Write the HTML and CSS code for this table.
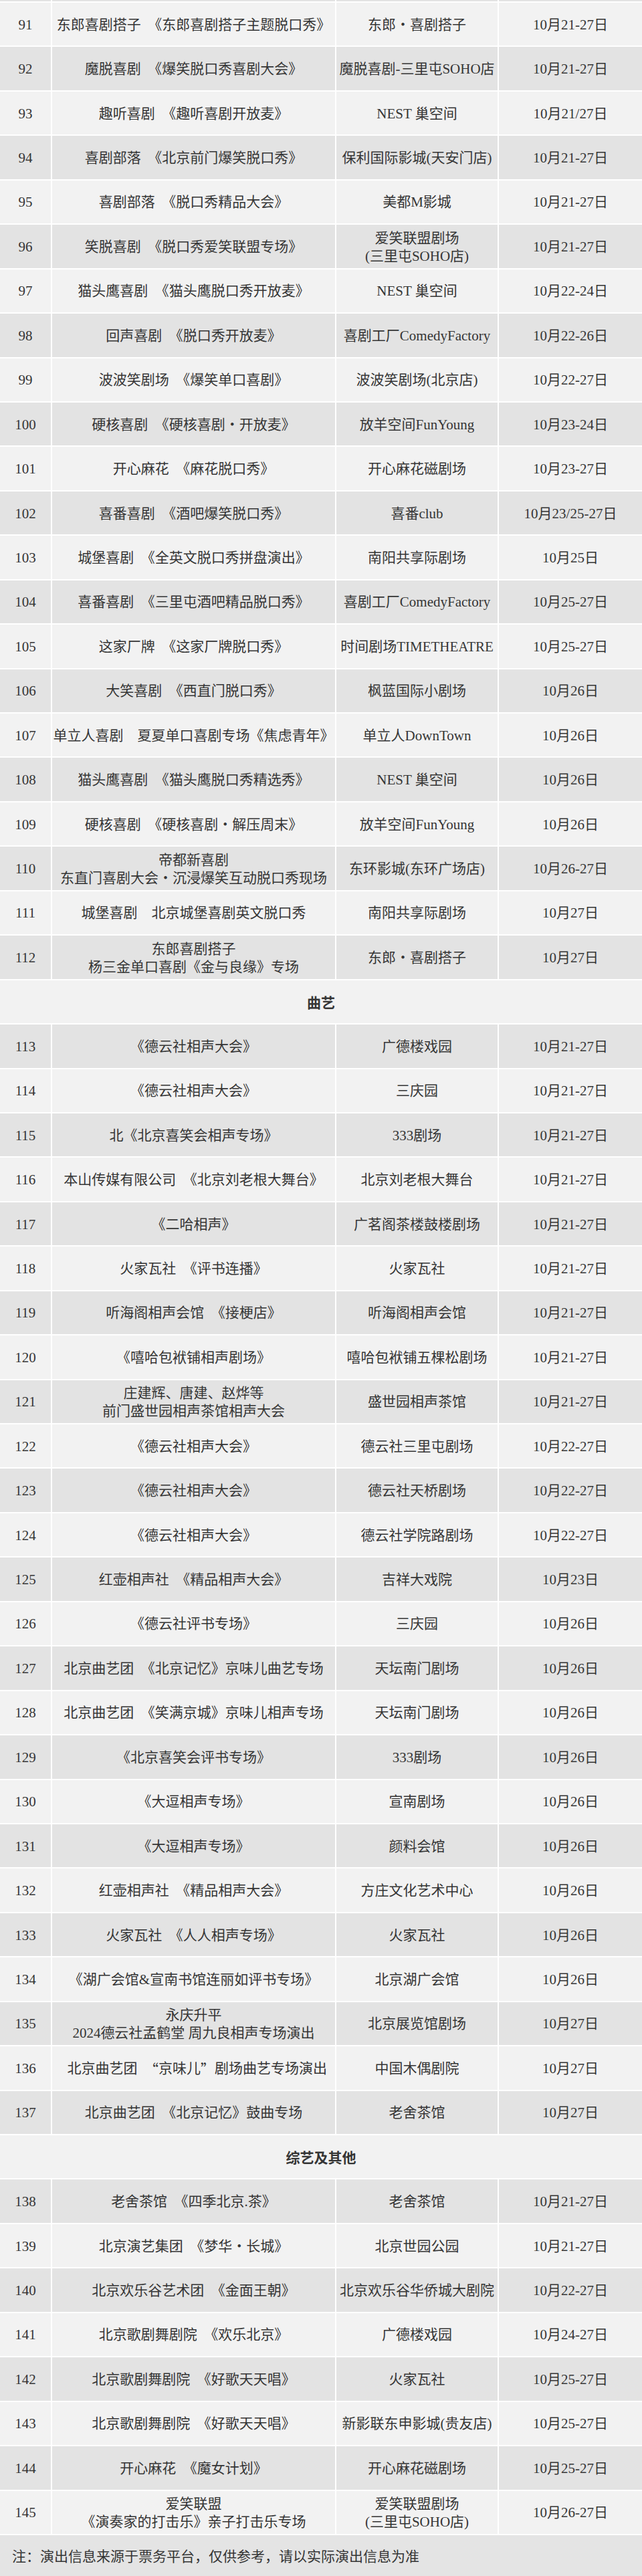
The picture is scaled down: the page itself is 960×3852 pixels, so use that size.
FILE: index.html
```html
<!DOCTYPE html>
<html lang="zh-CN">
<head>
<meta charset="utf-8">
<title>演出信息</title>
<link rel="stylesheet" href="styles.css">
</head>
<body>
<div class="sheet">
  <div class="row dark stub"><div></div><div></div><div></div><div></div></div>

  <div class="row light"><div>91</div><div>东郎喜剧搭子　《东郎喜剧搭子主题脱口秀》</div><div>东郎・喜剧搭子</div><div>10月21-27日</div></div>
  <div class="row dark"><div>92</div><div>魔脱喜剧　《爆笑脱口秀喜剧大会》</div><div>魔脱喜剧-三里屯SOHO店</div><div>10月21-27日</div></div>
  <div class="row light"><div>93</div><div>趣听喜剧　《趣听喜剧开放麦》</div><div>NEST 巢空间</div><div>10月21/27日</div></div>
  <div class="row dark"><div>94</div><div>喜剧部落　《北京前门爆笑脱口秀》</div><div>保利国际影城(天安门店)</div><div>10月21-27日</div></div>
  <div class="row light"><div>95</div><div>喜剧部落　《脱口秀精品大会》</div><div>美都M影城</div><div>10月21-27日</div></div>
  <div class="row dark"><div>96</div><div>笑脱喜剧　《脱口秀爱笑联盟专场》</div><div><p class="lines"><span class="line">爱笑联盟剧场</span><span class="line">(三里屯SOHO店)</span></p></div><div>10月21-27日</div></div>
  <div class="row light"><div>97</div><div>猫头鹰喜剧　《猫头鹰脱口秀开放麦》</div><div>NEST 巢空间</div><div>10月22-24日</div></div>
  <div class="row dark"><div>98</div><div>回声喜剧　《脱口秀开放麦》</div><div>喜剧工厂ComedyFactory</div><div>10月22-26日</div></div>
  <div class="row light"><div>99</div><div>波波笑剧场　《爆笑单口喜剧》</div><div>波波笑剧场(北京店)</div><div>10月22-27日</div></div>
  <div class="row dark"><div>100</div><div>硬核喜剧　《硬核喜剧・开放麦》</div><div>放羊空间FunYoung</div><div>10月23-24日</div></div>
  <div class="row light"><div>101</div><div>开心麻花　《麻花脱口秀》</div><div>开心麻花磁剧场</div><div>10月23-27日</div></div>
  <div class="row dark"><div>102</div><div>喜番喜剧　《酒吧爆笑脱口秀》</div><div>喜番club</div><div>10月23/25-27日</div></div>
  <div class="row light"><div>103</div><div>城堡喜剧　《全英文脱口秀拼盘演出》</div><div>南阳共享际剧场</div><div>10月25日</div></div>
  <div class="row dark"><div>104</div><div>喜番喜剧　《三里屯酒吧精品脱口秀》</div><div>喜剧工厂ComedyFactory</div><div>10月25-27日</div></div>
  <div class="row light"><div>105</div><div>这家厂牌　《这家厂牌脱口秀》</div><div>时间剧场TIMETHEATRE</div><div>10月25-27日</div></div>
  <div class="row dark"><div>106</div><div>大笑喜剧　《西直门脱口秀》</div><div>枫蓝国际小剧场</div><div>10月26日</div></div>
  <div class="row light"><div>107</div><div>单立人喜剧　夏夏单口喜剧专场《焦虑青年》</div><div>单立人DownTown</div><div>10月26日</div></div>
  <div class="row dark"><div>108</div><div>猫头鹰喜剧　《猫头鹰脱口秀精选秀》</div><div>NEST 巢空间</div><div>10月26日</div></div>
  <div class="row light"><div>109</div><div>硬核喜剧　《硬核喜剧・解压周末》</div><div>放羊空间FunYoung</div><div>10月26日</div></div>
  <div class="row dark"><div>110</div><div><p class="lines"><span class="line">帝都新喜剧</span><span class="line">东直门喜剧大会・沉浸爆笑互动脱口秀现场</span></p></div><div>东环影城(东环广场店)</div><div>10月26-27日</div></div>
  <div class="row light"><div>111</div><div>城堡喜剧　北京城堡喜剧英文脱口秀</div><div>南阳共享际剧场</div><div>10月27日</div></div>
  <div class="row dark"><div>112</div><div><p class="lines"><span class="line">东郎喜剧搭子</span><span class="line">杨三金单口喜剧《金与良缘》专场</span></p></div><div>东郎・喜剧搭子</div><div>10月27日</div></div>

  <div class="section">曲艺</div>

  <div class="row dark"><div>113</div><div>《德云社相声大会》</div><div>广德楼戏园</div><div>10月21-27日</div></div>
  <div class="row light"><div>114</div><div>《德云社相声大会》</div><div>三庆园</div><div>10月21-27日</div></div>
  <div class="row dark"><div>115</div><div>北《北京喜笑会相声专场》</div><div>333剧场</div><div>10月21-27日</div></div>
  <div class="row light"><div>116</div><div>本山传媒有限公司　《北京刘老根大舞台》</div><div>北京刘老根大舞台</div><div>10月21-27日</div></div>
  <div class="row dark"><div>117</div><div>《二哈相声》</div><div>广茗阁茶楼鼓楼剧场</div><div>10月21-27日</div></div>
  <div class="row light"><div>118</div><div>火家瓦社　《评书连播》</div><div>火家瓦社</div><div>10月21-27日</div></div>
  <div class="row dark"><div>119</div><div>听海阁相声会馆　《接梗店》</div><div>听海阁相声会馆</div><div>10月21-27日</div></div>
  <div class="row light"><div>120</div><div>《嘻哈包袱铺相声剧场》</div><div>嘻哈包袱铺五棵松剧场</div><div>10月21-27日</div></div>
  <div class="row dark"><div>121</div><div><p class="lines"><span class="line">庄建辉、唐建、赵烨等</span><span class="line">前门盛世园相声茶馆相声大会</span></p></div><div>盛世园相声茶馆</div><div>10月21-27日</div></div>
  <div class="row light"><div>122</div><div>《德云社相声大会》</div><div>德云社三里屯剧场</div><div>10月22-27日</div></div>
  <div class="row dark"><div>123</div><div>《德云社相声大会》</div><div>德云社天桥剧场</div><div>10月22-27日</div></div>
  <div class="row light"><div>124</div><div>《德云社相声大会》</div><div>德云社学院路剧场</div><div>10月22-27日</div></div>
  <div class="row dark"><div>125</div><div>红壶相声社　《精品相声大会》</div><div>吉祥大戏院</div><div>10月23日</div></div>
  <div class="row light"><div>126</div><div>《德云社评书专场》</div><div>三庆园</div><div>10月26日</div></div>
  <div class="row dark"><div>127</div><div>北京曲艺团　《北京记忆》京味儿曲艺专场</div><div>天坛南门剧场</div><div>10月26日</div></div>
  <div class="row light"><div>128</div><div>北京曲艺团　《笑满京城》京味儿相声专场</div><div>天坛南门剧场</div><div>10月26日</div></div>
  <div class="row dark"><div>129</div><div>《北京喜笑会评书专场》</div><div>333剧场</div><div>10月26日</div></div>
  <div class="row light"><div>130</div><div>《大逗相声专场》</div><div>宣南剧场</div><div>10月26日</div></div>
  <div class="row dark"><div>131</div><div>《大逗相声专场》</div><div>颜料会馆</div><div>10月26日</div></div>
  <div class="row light"><div>132</div><div>红壶相声社　《精品相声大会》</div><div>方庄文化艺术中心</div><div>10月26日</div></div>
  <div class="row dark"><div>133</div><div>火家瓦社　《人人相声专场》</div><div>火家瓦社</div><div>10月26日</div></div>
  <div class="row light"><div>134</div><div>《湖广会馆&amp;宣南书馆连丽如评书专场》</div><div>北京湖广会馆</div><div>10月26日</div></div>
  <div class="row dark"><div>135</div><div><p class="lines"><span class="line">永庆升平</span><span class="line">2024德云社孟鹤堂 周九良相声专场演出</span></p></div><div>北京展览馆剧场</div><div>10月27日</div></div>
  <div class="row light"><div>136</div><div>北京曲艺团　<span class="cjk">“</span>京味儿<span class="cjk">”</span>剧场曲艺专场演出</div><div>中国木偶剧院</div><div>10月27日</div></div>
  <div class="row dark"><div>137</div><div>北京曲艺团　《北京记忆》鼓曲专场</div><div>老舍茶馆</div><div>10月27日</div></div>

  <div class="section">综艺及其他</div>

  <div class="row dark"><div>138</div><div>老舍茶馆　《四季北京.茶》</div><div>老舍茶馆</div><div>10月21-27日</div></div>
  <div class="row light"><div>139</div><div>北京演艺集团　《梦华・长城》</div><div>北京世园公园</div><div>10月21-27日</div></div>
  <div class="row dark"><div>140</div><div>北京欢乐谷艺术团　《金面王朝》</div><div>北京欢乐谷华侨城大剧院</div><div>10月22-27日</div></div>
  <div class="row light"><div>141</div><div>北京歌剧舞剧院　《欢乐北京》</div><div>广德楼戏园</div><div>10月24-27日</div></div>
  <div class="row dark"><div>142</div><div>北京歌剧舞剧院　《好歌天天唱》</div><div>火家瓦社</div><div>10月25-27日</div></div>
  <div class="row light"><div>143</div><div>北京歌剧舞剧院　《好歌天天唱》</div><div>新影联东申影城(贵友店)</div><div>10月25-27日</div></div>
  <div class="row dark"><div>144</div><div>开心麻花　《魔女计划》</div><div>开心麻花磁剧场</div><div>10月25-27日</div></div>
  <div class="row light"><div>145</div><div><p class="lines"><span class="line">爱笑联盟</span><span class="line">《演奏家的打击乐》亲子打击乐专场</span></p></div><div><p class="lines"><span class="line">爱笑联盟剧场</span><span class="line">(三里屯SOHO店)</span></p></div><div>10月26-27日</div></div>

  <div class="note">注：演出信息来源于票务平台，仅供参考，请以实际演出信息为准</div>
</div>
</body>
</html>
```

FILE: styles.css
```css
* {
  box-sizing: border-box;
}

html,
body {
  margin: 0;
  padding: 0;
  background: #ffffff;
}

body {
  font-family: "Liberation Serif", "Noto Sans CJK SC", serif;
  font-size: 21px;
  color: #353535;
}

.sheet {
  width: 960px;
  display: flex;
  flex-direction: column;
  gap: 2px;
}

.row {
  display: grid;
  grid-template-columns: 76px 423px 241px 214px;
  column-gap: 2px;
  height: 64.44px;
}

.row > div {
  display: flex;
  align-items: center;
  justify-content: center;
  text-align: center;
  line-height: 25px;
  white-space: nowrap;
  padding-top: 2px;
}

.row.light > div {
  background: #f2f2f2;
}

.row.dark > div {
  background: #e3e3e3;
}

.row.stub {
  height: 2px;
}

.row.stub > div {
  padding: 0;
}

.lines {
  margin: 0;
  display: flex;
  flex-direction: column;
  align-items: center;
  gap: 3px;
}

.line {
  display: block;
  line-height: 24px;
}

.section {
  height: 64.44px;
  display: flex;
  align-items: center;
  justify-content: center;
  font-weight: 700;
  background: #f2f2f2;
}

.note {
  height: 61px;
  display: flex;
  align-items: center;
  padding-left: 18px;
  background: #e4e4e4;
}

.cjk {
  font-family: "Noto Sans CJK SC", sans-serif;
}
```
